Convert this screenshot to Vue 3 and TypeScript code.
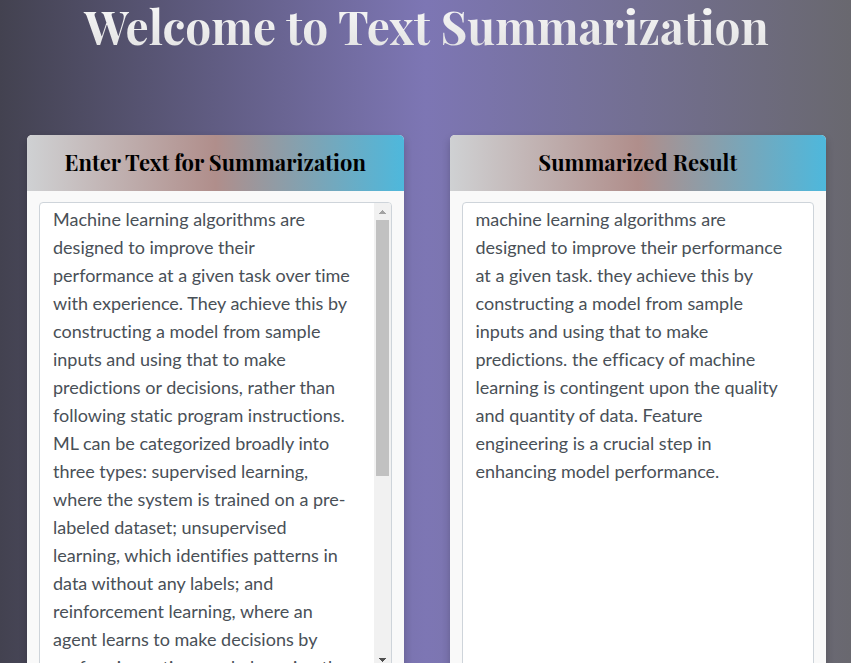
<script setup lang="ts">
import { ref } from 'vue'

const source = ref<string>(
  'Machine learning algorithms are designed to improve their performance at a given task over time with experience. They achieve this by constructing a model from sample inputs and using that to make predictions or decisions, rather than following static program instructions. ML can be categorized broadly into three types: supervised learning, where the system is trained on a pre-labeled dataset; unsupervised learning, which identifies patterns in data without any labels; and reinforcement learning, where an agent learns to make decisions by performing actions and observing the'
)

const result = ref<string>(
  'machine learning algorithms are designed to improve their performance at a given task. they achieve this by constructing a model from sample inputs and using that to make predictions. the efficacy of machine learning is contingent upon the quality and quantity of data. Feature engineering is a crucial step in enhancing model performance.'
)
</script>

<template>
  <main class="page">
    <h1 class="title">Welcome to Text Summarization</h1>
    <div class="columns">
      <section class="card">
        <h2 class="card-header"><label for="source">Enter Text for Summarization</label></h2>
        <div class="card-body">
          <div class="field">
            <textarea id="source" v-model="source" class="text" spellcheck="false"></textarea>
            <div class="scrollbar" aria-hidden="true">
              <svg class="arrow" viewBox="0 0 17 17"><path d="M8 7h1v1h1v1h1v1h1v1H5v-1h1V9h1V8h1z" fill="#a3a3a3" /></svg>
              <div class="track"><div class="thumb"></div></div>
              <svg class="arrow" viewBox="0 0 17 17"><path d="M5 6h7v1h-1v1h-1v1H9v1H8V9H7V8H6V7H5z" fill="#505050" /></svg>
            </div>
          </div>
        </div>
      </section>
      <section class="card">
        <h2 class="card-header"><label for="result">Summarized Result</label></h2>
        <div class="card-body">
          <div class="field">
            <textarea id="result" v-model="result" class="text" readonly spellcheck="false"></textarea>
          </div>
        </div>
      </section>
    </div>
  </main>
</template>

<style>
body {
  margin: 0;
}
</style>

<style scoped>
.page {
  box-sizing: border-box;
  height: 100vh;
  overflow: hidden;
  padding: 0 25px 0 27px;
  background: linear-gradient(to right, #434250, #7d76b4 50%, #69686f);
}

.title {
  margin: 0 0 82px;
  font: bold 46px/53px 'Playfair Display', 'Liberation Serif', serif;
  text-align: center;
  color: transparent;
  background: linear-gradient(to bottom, #f8f8f8, #e2e2e2);
  background-clip: text;
  -webkit-background-clip: text;
}

.columns {
  display: grid;
  grid-template-columns: 1fr 1fr;
  gap: 46px;
}

.card {
  min-width: 0;
  border-radius: 5px;
  background: #f9f9f9;
  box-shadow: 0 4px 8px rgba(0, 0, 0, 0.2);
}

.card-header {
  margin: 0;
  padding-bottom: 2px;
  font: bold 22px/54px 'Playfair Display', 'Liberation Serif', serif;
  text-align: center;
  color: #000;
  border-radius: 5px 5px 0 0;
  background: linear-gradient(to right, #cfd1d3, #b08e8b 50%, #4eb8dc);
}

.card-body {
  padding: 11px 12px 20px;
}

.field {
  display: flex;
  height: 466px;
  border: 1px solid #ced4da;
  border-radius: 4px;
  overflow: hidden;
  background: #fff;
}

.text {
  box-sizing: border-box;
  flex: 1;
  min-width: 0;
  margin: 0;
  padding: 2px 20px 2px 13px;
  border: 0;
  outline: 0;
  resize: none;
  background: transparent;
  color: #495057;
  font: 18px/28px Lato, sans-serif;
  font-variant-ligatures: none;
  scrollbar-width: none;
}

.scrollbar {
  display: flex;
  flex-direction: column;
  flex: none;
  width: 17px;
  background: #f1f1f1;
}

.arrow {
  flex: none;
  width: 17px;
  height: 17px;
}

.track {
  flex: 1;
  padding: 0 2px;
}

.thumb {
  height: 256px;
  background: #c1c1c1;
}
</style>
